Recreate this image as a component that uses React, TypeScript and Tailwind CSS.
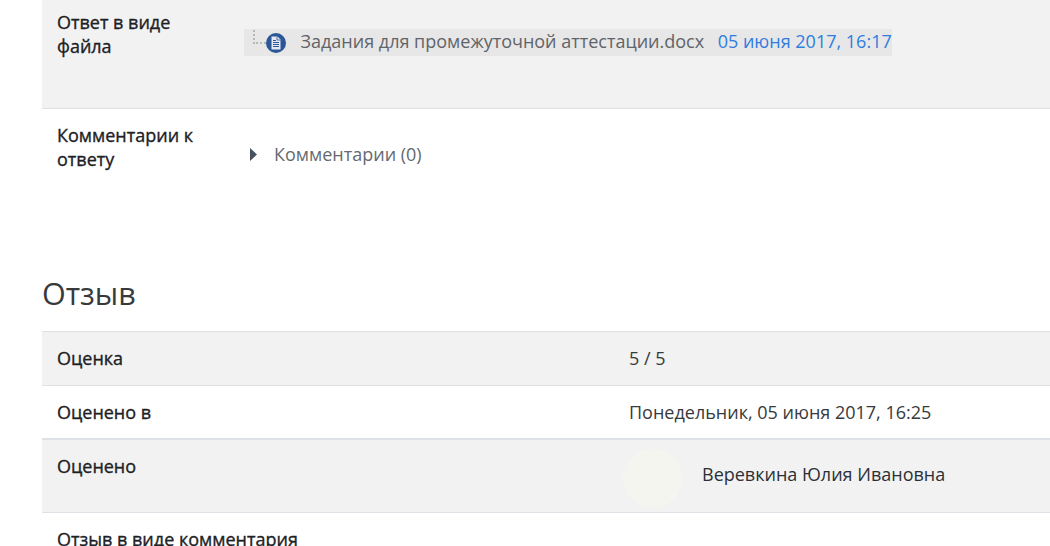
import React from 'react';

const font = { fontFamily: '"Open Sans", "Noto Sans", sans-serif' };

const labelClass = 'pl-[15px] text-[#1d2125] [-webkit-text-stroke:0.35px_#1d2125]';

function FileIcon() {
  return (
    <svg width="20" height="20" viewBox="0 0 20 20" className="shrink-0">
      <circle cx="10" cy="10" r="10" fill="#2b5797" />
      <path d="M5.5 3.5h6L14.5 6.500v10h-9z" fill="#e3e8f2" />
      <path d="M11 3.500V7h3.500" fill="none" stroke="#2b5797" strokeWidth="0.8" />
      <path d="M7 7.500h3M7 9.500h6M7 11.500h6M7 13.500h6" stroke="#2b5797" strokeWidth="1" />
    </svg>
  );
}

function GradeRow({ label, shaded, className, children }: { label: string; shaded?: boolean; className: string; children: React.ReactNode }) {
  return (
    <div className={`flex border-b border-[#dee2e6] ${shaded ? 'bg-[#f2f2f3]' : 'bg-white'} ${className}`}>
      <div className={`w-[587px] shrink-0 ${labelClass}`}>{label}</div>
      <div className="flex-1 text-[#373a3c]">{children}</div>
    </div>
  );
}

export default function App() {
  return (
    <div className="h-[546px] w-[1050px] overflow-hidden bg-white pl-[42px] text-[18px] leading-[24px]" style={font}>
      <div className="flex h-[109px] border-b border-[#dee2e6] bg-[#f2f2f3] pt-[10px]">
        <div className={`w-[202px] shrink-0 ${labelClass}`}>
          Ответ в виде<br />файла
        </div>
        <div className="pt-[19px]">
          <div className="flex h-[27px] w-[648px] items-center bg-[#e7e7e7] text-[#5f6468]">
            <div className="relative ml-[22px] flex items-center">
              <span className="absolute bottom-[9px] right-[20px] h-[14px] w-[13px] border-b-2 border-l-2 border-dotted border-[#b8b8b8]" />
              <FileIcon />
            </div>
            <span className="ml-[14.5px] -mt-[4px]">Задания для промежуточной аттестации.docx</span>
            <span className="ml-[13.5px] -mt-[4px] text-[#2f7de1]">05 июня 2017, 16:17</span>
          </div>
        </div>
      </div>

      <div className="flex h-[132px] pt-[14px]">
        <div className={`w-[202px] shrink-0 ${labelClass}`}>
          Комментарии к<br />ответу
        </div>
        <div className="flex items-start pt-[19px] text-[#646a70]">
          <svg width="7" height="13" viewBox="0 0 7 13" className="ml-[6px] mt-[6px] shrink-0">
            <path d="M0 0l7 6.500-7 6.500z" fill="#47535f" />
          </svg>
          <span className="ml-[17px]">Комментарии (0)</span>
        </div>
      </div>

      <h3 className="mb-[16px] mt-[30px] text-[30.5px] leading-[44px] text-[#373a3c]">Отзыв</h3>

      <div className="border-t border-[#dee2e6]">
        <GradeRow label="Оценка" shaded className="h-[54px] pt-[14px]">5 / 5</GradeRow>
        <GradeRow label="Оценено в" className="h-[54px] pt-[14px] border-b-2">Понедельник, 05 июня 2017, 16:25</GradeRow>
        <GradeRow label="Оценено" shaded className="h-[73px] pt-[14px]">
          <div className="-mt-[5px] flex items-center">
            <span className="-ml-[6px] h-[59px] w-[59px] shrink-0 rounded-full bg-[#f5f5f0]" />
            <span className="ml-[20px] -mt-[10px] text-[#2b3036]">Веревкина Юлия Ивановна</span>
          </div>
        </GradeRow>
        <div className={`pt-[14px] ${labelClass}`}>Отзыв в виде комментария</div>
      </div>
    </div>
  );
}
